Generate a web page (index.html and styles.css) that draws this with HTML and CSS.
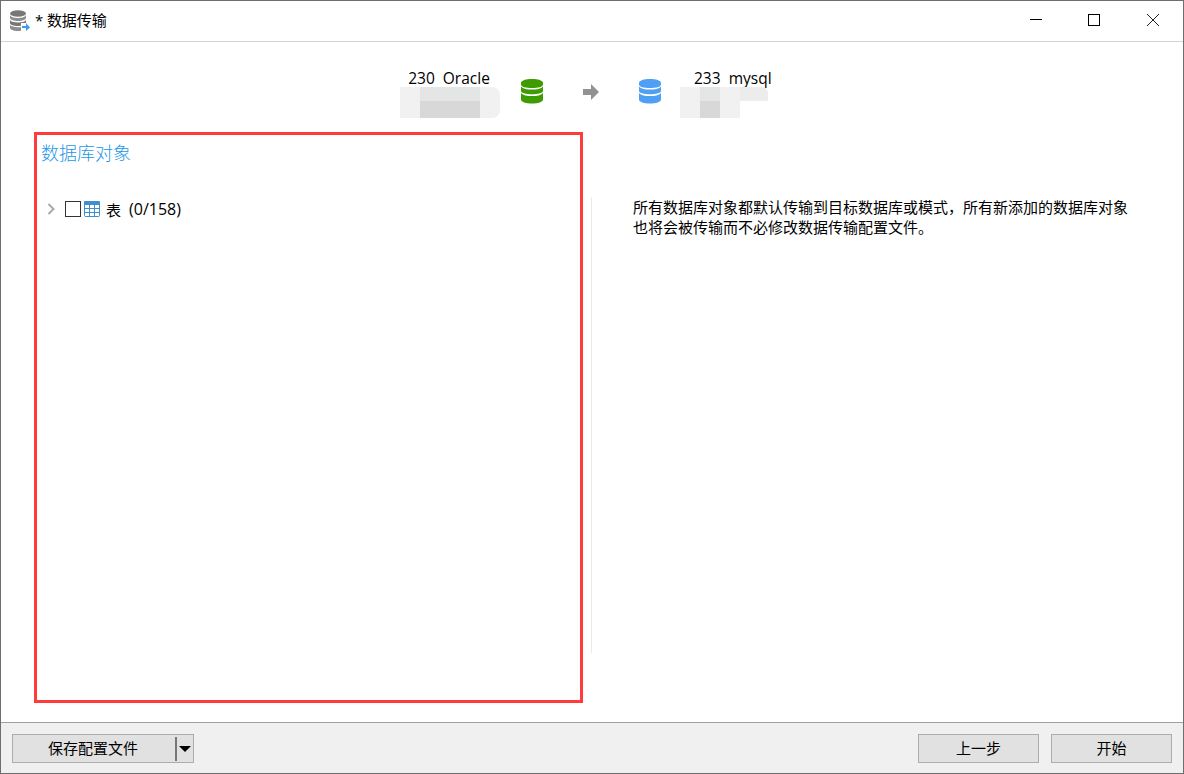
FILE: index.html
```html
<!DOCTYPE html>
<html lang="zh-CN">
<head>
<meta charset="UTF-8">
<meta name="viewport" content="width=device-width, initial-scale=1.0">
<title>数据传输</title>
<link rel="stylesheet" href="styles.css">
</head>
<body>

<div class="window">
    <div class="titlebar">
        <svg class="app-icon" width="20" height="21" viewBox="0 0 20 21">
            <ellipse cx="8" cy="3.500" rx="8" ry="3.200" fill="#777"/>
            <path d="M0 5v2.800C0 9.800 3.500 11 8 11s8-1.200 8-3.200V5C15 7.200 11.500 8 8 8S1 7.200 0 5z" fill="#8e8e8e"/>
            <path d="M0 10v3c0 2 3.500 3 8 3 1 0 2-.1 3-.2V13h5v-3c-1 1.800-4.500 2.500-8 2.500S1 11.800 0 10z" fill="#777"/>
            <path d="M0 15v2.800C0 19.800 3.500 21 8 21c1 0 2-.1 3-.2V17c-1 .1-2 .2-3 .2-3.500 0-7-.8-8-2.200z" fill="#8e8e8e"/>
            <path d="M12 16h4v-3l4 4.500-4 3.500v-3h-4z" fill="#3f9bea"/>
        </svg>
        <span class="title">* 数据传输</span>
        <div class="win-controls">
            <svg width="12" height="12" viewBox="0 0 12 12"><path d="M0 5.500h12" stroke="#000" fill="none"/></svg>
            <svg width="12" height="12" viewBox="0 0 12 12"><rect x="0.500" y="0.500" width="11" height="11" stroke="#000" fill="none"/></svg>
            <svg width="12" height="12" viewBox="0 0 12 12"><path d="M0 0l12 12M12 0L0 12" stroke="#222" fill="none"/></svg>
        </div>
    </div>

    <div class="connections">
        <div class="conn conn-source">
            <div class="conn-name">230&nbsp; Oracle</div>
            <div class="mosaic mosaic-a">
                <i class="c1"></i><i class="c2"></i><i class="c2"></i><i class="c2"></i><i class="c1"></i>
                <i class="c1"></i><i class="c3"></i><i class="c3"></i><i class="c3"></i><i class="c1"></i>
            </div>
        </div>
        <svg class="db" width="22" height="25" viewBox="0 0 22 25">
            <path d="M0 4C0 1.500 5 0 11 0s11 1.500 11 4v1.500C22 8 17 9 11 9S0 8 0 5.500zM0 7.500C2 10 6 10.500 11 10.500s9-.5 11-3V12c0 2-5 3.200-11 3.200S0 14 0 12zM0 14c2 2.500 6 3 11 3s9-.5 11-3v6.500C22 23 17 24.500 11 24.500S0 23 0 20.500z" fill="#3f9c00"/>
        </svg>
        <svg class="arrow" width="16" height="16" viewBox="0 0 16 16">
            <path d="M0 5h8V0l8 8-8 8v-5H0z" fill="#929292"/>
        </svg>
        <svg class="db" width="22" height="25" viewBox="0 0 22 25">
            <path d="M0 4C0 1.500 5 0 11 0s11 1.500 11 4v1.500C22 8 17 9 11 9S0 8 0 5.500zM0 7.500C2 10 6 10.500 11 10.500s9-.5 11-3V12c0 2-5 3.200-11 3.200S0 14 0 12zM0 14c2 2.500 6 3 11 3s9-.5 11-3v6.500C22 23 17 24.500 11 24.500S0 23 0 20.500z" fill="#4f9ff5"/>
        </svg>
        <div class="conn conn-target">
            <div class="conn-name">233&nbsp; mysql</div>
            <div class="mosaic mosaic-b">
                <i class="c1"></i><i class="c2"></i><i class="c1"></i><i class="c4 corner"></i>
                <i class="c1"></i><i class="c3"></i><i class="c1"></i><i class="c0"></i>
            </div>
        </div>
    </div>

    <div class="content">
        <div class="objects">
            <h2>数据库对象</h2>
            <div class="tree-row">
                <svg class="chevron" width="8" height="12" viewBox="0 0 8 12"><path d="M1.500 1l5 5-5 5" stroke="#aaa" stroke-width="2" fill="none"/></svg>
                <span class="checkbox"></span>
                <svg class="table-icon" width="16" height="16" viewBox="0 0 16 16">
                    <rect x="0.500" y="0.500" width="15" height="15" rx="1" fill="#fff" stroke="#3f8fd0"/>
                    <path d="M0 1a1 1 0 0 1 1-1h14a1 1 0 0 1 1 1v3H0z" fill="#3f8fd0"/>
                    <path d="M5.500 4v11M10.500 4v11M1 7.500h14M1 11.500h14" stroke="#3f8fd0" fill="none"/>
                </svg>
                <span class="tree-label">表</span>
                <span class="tree-count">(0/158)</span>
            </div>
        </div>
        <div class="description">
            <p>所有数据库对象都默认传输到目标数据库或模式，所有新添加的数据库对象<br>也将会被传输而不必修改数据传输配置文件。</p>
        </div>
    </div>

    <div class="footer">
        <div class="btn save-btn">
            <span class="save-label">保存配置文件</span>
            <span class="save-drop"></span>
        </div>
        <div class="footer-right">
            <div class="btn">上一步</div>
            <div class="btn">开始</div>
        </div>
    </div>

    <div class="highlight"></div>
</div>

</body>
</html>
```

FILE: styles.css
```css
* {
    box-sizing: border-box;
}

body {
    margin: 0;
    font-family: "Open Sans", "Noto Sans CJK SC", sans-serif;
    font-size: 15px;
    color: #000;
    background-color: #fff;
}

.window {
    position: relative;
    width: 1184px;
    height: 774px;
    border: 1px solid #6e6e6e;
    display: flex;
    flex-direction: column;
    overflow: hidden;
}

.titlebar {
    height: 41px;
    flex: none;
    display: flex;
    align-items: center;
    padding: 0 0 2px 9px;
    border-bottom: 1px solid #d2d2d2;
}

.title {
    margin-left: 5px;
    letter-spacing: -0.1px;
    line-height: 20px;
}

.win-controls {
    margin-left: auto;
    display: flex;
    gap: 46px;
    padding-right: 24px;
}

.win-controls svg:last-child {
    margin-left: 1px;
}

.connections {
    height: 90px;
    flex: none;
    display: flex;
    align-items: flex-start;
    padding: 26px 0 0 399px;
}

.conn-name {
    font-size: 15.500px;
    line-height: 20px;
    text-align: center;
    white-space: nowrap;
}

.conn-source {
    width: 100px;
}

.conn-source .conn-name {
    padding-right: 2px;
}

.conn-target {
    width: 88px;
    margin-left: 19px;
}

.conn-target .conn-name {
    text-align: left;
    padding-left: 14px;
}

.mosaic {
    display: grid;
    grid-template-rows: 14px 17px;
    margin-top: -1px;
}

.mosaic-a {
    grid-template-columns: repeat(5, 20px);
    border-radius: 0 8px 8px 0;
    overflow: hidden;
}

.mosaic-b {
    grid-template-columns: 20px 20px 20px 28px;
}

.corner {
    border-top-right-radius: 6px;
}

.c0 { background-color: #fff; }
.c1 { background-color: #f1f1f1; }
.c2 { background-color: #e4e5e5; }
.c3 { background-color: #d8d8d8; }
.c4 { background-color: #ececec; }

.db {
    margin-top: 11px;
}

.conn-source + .db {
    margin-left: 21px;
}

.arrow {
    margin: 16px 0 0 40px;
}

.arrow + .db {
    margin-left: 40px;
}

.content {
    flex: 1;
    display: flex;
    min-height: 0;
}

.objects {
    width: 590px;
    padding: 9px 0 0 40px;
}

.objects h2 {
    margin: 0;
    font-size: 18px;
    font-weight: 300;
    line-height: 24px;
    color: #1c97e8;
}

.tree-row {
    display: flex;
    align-items: center;
    height: 20px;
    margin: 34px 0 0 6px;
}

.checkbox {
    width: 16px;
    height: 16px;
    margin-left: 10px;
    border: 1px solid #333;
    background-color: #fff;
}

.table-icon {
    margin-left: 3px;
}

.tree-label {
    margin-left: 6px;
}

.tree-count {
    margin-left: 8px;
    font-size: 16px;
}

.description {
    flex: 1;
    height: 456px;
    margin-top: 65px;
    padding-left: 41px;
    border-left: 1px solid #eaeaea;
}

.description p {
    margin: 0;
    line-height: 20px;
    font-size: 15px;
}

.footer {
    height: 51px;
    flex: none;
    display: flex;
    justify-content: space-between;
    align-items: flex-start;
    padding: 11px 11px 0 11px;
    background-color: #f0f0f0;
    border-top: 1px solid #a0a0a0;
}

.footer-right {
    display: flex;
    gap: 12px;
}

.btn {
    width: 121px;
    height: 29px;
    padding-bottom: 2px;
    border: 1px solid #adadad;
    background-color: #e1e1e1;
    display: flex;
    align-items: center;
    justify-content: center;
    line-height: 20px;
}

.save-btn {
    width: 182px;
    padding: 0;
    justify-content: flex-start;
}

.save-label {
    width: 160px;
    margin: 0 2px 2px 0;
    text-align: center;
}

.save-drop {
    position: relative;
    width: 18px;
    height: 24px;
    border-left: 2px solid #777;
}

.save-drop::after {
    content: "";
    position: absolute;
    left: 2px;
    top: 9px;
    border-left: 6px solid transparent;
    border-right: 6px solid transparent;
    border-top: 6px solid #000;
}

/* red annotation box drawn over the screenshot */
.highlight {
    position: absolute;
    left: 33px;
    top: 131px;
    width: 549px;
    height: 571px;
    border: 3px solid #ff3b3b;
}
```
